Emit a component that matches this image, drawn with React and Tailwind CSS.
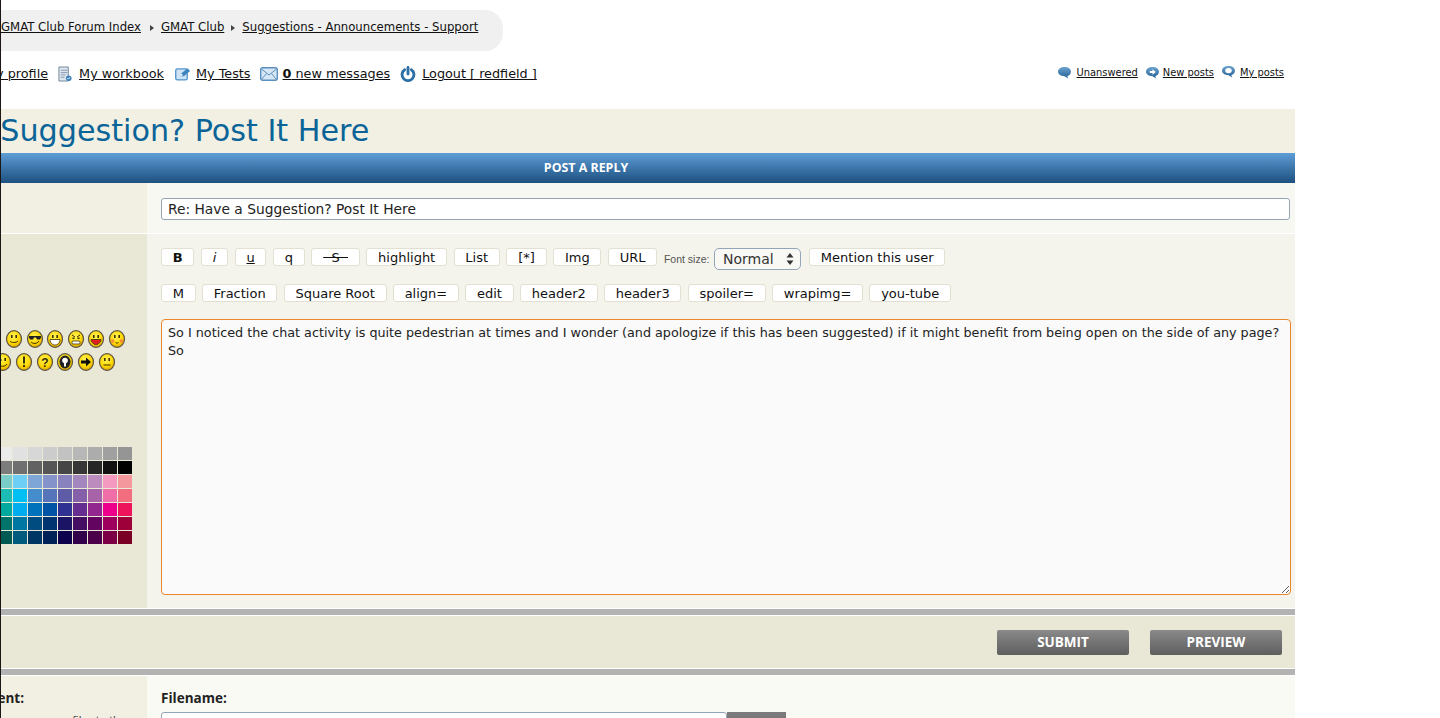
import { Fragment } from 'react'

const DEJAVU = "font-['DejaVu_Sans',sans-serif]"

const topButtons = ['B', 'i', 'u', 'q', 'S', 'highlight', 'List', '[*]', 'Img', 'URL']
const bottomButtons = ['M', 'Fraction', 'Square Root', 'align=', 'edit', 'header2', 'header3', 'spoiler=', 'wrapimg=', 'you-tube']

const palette = [
  ['#ebebeb', '#e1e1e1', '#d7d7d7', '#cccccc', '#c2c2c2', '#b7b7b7', '#acacac', '#a0a0a0', '#959595'],
  ['#7c7c7c', '#6f6f6f', '#626262', '#555555', '#464646', '#363636', '#262626', '#111111', '#000000'],
  ['#7accc8', '#6dcff6', '#7ea7d8', '#8493ca', '#8882be', '#a286bd', '#bc8cbf', '#f49ac1', '#f5989d'],
  ['#1cbbb4', '#00bff3', '#448ccb', '#5574b9', '#5e5ca7', '#855fa8', '#a763a8', '#ef6ea8', '#f26d7d'],
  ['#00a99d', '#00aeef', '#0072bc', '#0054a6', '#2e3192', '#662d91', '#92278f', '#ec008c', '#ed145b'],
  ['#00746b', '#0076a3', '#004b80', '#003471', '#1b1464', '#440e62', '#630460', '#9e005d', '#9e0039'],
  ['#005952', '#005b7f', '#003663', '#002157', '#0d004c', '#32004b', '#4b0049', '#7b0046', '#7a0026'],
]

function Smiley({ children }) {
  return (
    <svg viewBox="0 0 18 18" className="w-[18px] h-[18px] shrink-0">
      <defs>
        <radialGradient id="sm" cx="45%" cy="35%" r="70%">
          <stop offset="0%" stopColor="#fff25a" />
          <stop offset="60%" stopColor="#ffd800" />
          <stop offset="100%" stopColor="#d99a00" />
        </radialGradient>
      </defs>
      <ellipse cx="9" cy="9" rx="7.5" ry="8.4" fill="url(#sm)" stroke="#5c5546" strokeWidth="1.2" />
      {children}
    </svg>
  )
}

const eyes = (
  <Fragment>
    <rect x="6" y="5" width="1.6" height="3" fill="#3a3000" />
    <rect x="10.4" y="5" width="1.6" height="3" fill="#3a3000" />
  </Fragment>
)

const smileysTop = [
  <Fragment key="a">{eyes}<path d="M5 11c1.5 2 6 2 8 0" fill="none" stroke="#3a3000" /></Fragment>,
  <Fragment key="b"><path d="M3 6h12v1.5l-1 2h-3l-1-2H8l-1 2H4l-1-2z" fill="#222" /><path d="M5 12c2 2 6 2 8-1" fill="none" stroke="#3a3000" /></Fragment>,
  <Fragment key="c">{eyes}<path d="M4 9.500h10c0 4-3 5.500-5 5.500s-5-1.500-5-5.500z" fill="#fff" stroke="#3a3000" strokeWidth=".8" /></Fragment>,
  <Fragment key="d"><path d="M5 5l3 2M13 5l-3 2" stroke="#3a3000" /><rect x="5.500" y="7.500" width="2" height="1.500" fill="#3a3000" /><rect x="10.500" y="7.500" width="2" height="1.500" fill="#3a3000" /><rect x="5" y="11" width="8" height="3" rx="1" fill="#fff" stroke="#3a3000" strokeWidth=".8" /></Fragment>,
  <Fragment key="e">{eyes}<path d="M4 9.500h10c0 2-1 3-2 3.500-1 2-5 2-6 0-1-.500-2-1.500-2-3.500z" fill="#e02020" stroke="#3a3000" strokeWidth=".8" /></Fragment>,
  <Fragment key="f">{eyes}<circle cx="4.500" cy="11" r="1.800" fill="#f98a3a" /><circle cx="13.500" cy="11" r="1.800" fill="#f98a3a" /><path d="M7.500 12.500c1 .8 2 .8 3 0" fill="none" stroke="#3a3000" /></Fragment>,
]

const smileysBottom = [
  <Fragment key="a"><rect x="10.400" y="5" width="1.600" height="3" fill="#3a3000" /><path d="M5 7h3" stroke="#3a3000" /><path d="M5 11c1.500 3 6 3 8 0" fill="none" stroke="#3a3000" /></Fragment>,
  <Fragment key="b"><rect x="8" y="3.500" width="2" height="7" fill="#3a3000" /><rect x="8" y="12" width="2" height="2" fill="#3a3000" /></Fragment>,
  <text key="c" x="9" y="14" textAnchor="middle" fontSize="12" fontWeight="700" fontFamily="Liberation Sans" fill="#3a3000">?</text>,
  <Fragment key="d"><ellipse cx="9" cy="9" rx="5.500" ry="6.500" fill="#222" /><circle cx="9" cy="7.500" r="2.800" fill="#fff" /><rect x="8" y="10" width="2" height="3.500" fill="#fff" /></Fragment>,
  <path key="e" d="M4 7.500h5V4.500L14 9l-5 4.500v-3H4z" fill="#111" />,
  <Fragment key="f">{eyes}<path d="M5.500 12h7" stroke="#3a3000" /></Fragment>,
]

function ToolButton({ label }) {
  let text = label
  if (label === 'B') text = <b>B</b>
  if (label === 'i') text = <i>i</i>
  if (label === 'u') text = <u>u</u>
  if (label === 'S') text = <s className="decoration-[#111]">{'\u00a0\u00a0S\u00a0\u00a0'}</s>
  return (
    <button className="h-[18px] px-[10.750px] bg-white border border-[#e2e0d0] rounded-[3px] text-[13px] leading-[15px] text-[#111] shrink-0">
      {text}
    </button>
  )
}

function WorkbookIcon() {
  return (
    <svg viewBox="0 0 15 16" className="w-[14px] h-[16px] shrink-0">
      <path d="M1 .5h10v15H1z" fill="#dfe6ee" stroke="#6c8198" />
      <path d="M3 4h7M3 6.500h7M3 9h5M3 11.500h4" stroke="#8397ad" />
      <circle cx="11.500" cy="12.500" r="3" fill="#3d82bd" />
      <path d="M10 12.500l1 1 2-2" stroke="#fff" fill="none" />
    </svg>
  )
}

function TestsIcon() {
  return (
    <svg viewBox="0 0 18 15" className="w-4 h-[14px] shrink-0">
      <rect x=".8" y="1.800" width="13" height="12.400" rx="2" fill="#cfe3f4" stroke="#4f93cc" strokeWidth="1.500" />
      <path d="M6 10l1-3 7-6 3 3-7 6z" fill="#3f85c0" />
      <path d="M6 10l1-3 2 2z" fill="#fff" />
    </svg>
  )
}

function MailIcon() {
  return (
    <svg viewBox="0 0 18 14" className="w-[18px] h-[14px] shrink-0">
      <rect x=".7" y=".7" width="16.600" height="12.600" rx="2" fill="#d6e6f4" stroke="#5a8fbe" strokeWidth="1.400" />
      <path d="M1.500 2l7.500 6 7.500-6M1.500 12.500l5-6M16.500 12.500l-5-6" fill="none" stroke="#5a8fbe" />
    </svg>
  )
}

function PowerIcon() {
  return (
    <svg viewBox="0 0 17 17" className="w-4 h-4 shrink-0">
      <path d="M5 4a6.300 6.300 0 1 0 7 0" fill="none" stroke="#2c6fa6" strokeWidth="3" strokeLinecap="round" />
      <path d="M8.500 1.500v7" stroke="#2c6fa6" strokeWidth="3" strokeLinecap="round" />
    </svg>
  )
}

function Bubble({ kind }) {
  return (
    <svg viewBox="0 0 16 14" className="w-[15px] h-[13px] shrink-0">
      <defs>
        <linearGradient id="bb" x1="0" y1="0" x2="0" y2="1">
          <stop offset="0%" stopColor="#6ea3cf" />
          <stop offset="100%" stopColor="#225f93" />
        </linearGradient>
      </defs>
      <path d="M8 1c4 0 7 2 7 5s-2 4.500-4 5l1 2.500-4-2.500c-4 0-7-2-7-5s3-5 7-5z" fill="url(#bb)" />
      {kind === 'new' && <path d="M5 5.500h3V3.500l3.500 3-3.500 3v-2H5z" fill="#fff" />}
      {kind === 'my' && <ellipse cx="8" cy="6" rx="3.500" ry="2.800" fill="#fff" />}
    </svg>
  )
}

function Crumb() {
  return (
    <svg viewBox="0 0 4 6" className="w-1 h-[6px] shrink-0">
      <path d="M0 0l4 3-4 3z" fill="#444" />
    </svg>
  )
}

export default function App() {
  return (
    <div className={`h-[718px] overflow-hidden bg-white ${DEJAVU}`}>
      <div className="w-[1295px] h-[718px] overflow-hidden border-l border-[#1c1714]">
        {/* top links */}
        <div className="h-[109px] pt-[10px] overflow-hidden">
          <div className="w-[502px] h-[41px] pb-[5px] bg-[#f0f0f0] rounded-r-[18px] flex items-center gap-[7px] text-[11.700px] text-[#111]">
            <a className="underline mr-[2px]">GMAT Club Forum Index</a>
            <Crumb />
            <a className="underline">GMAT Club</a>
            <Crumb />
            <a className="underline">Suggestions - Announcements - Support</a>
          </div>
          <div className="flex justify-between items-center mt-[13px] pr-[11px] h-[20px]">
            <div className="flex items-center text-[12.800px] text-[#111] -ml-[16px]">
              <a className="underline">My profile</a>
              <span className="ml-[10px]"><WorkbookIcon /></span>
              <a className="underline ml-[7px]">My workbook</a>
              <span className="ml-[11px]"><TestsIcon /></span>
              <a className="underline ml-[5px]">My Tests</a>
              <span className="ml-[9px]"><MailIcon /></span>
              <a className="underline ml-[5px]"><b>0</b> new messages</a>
              <span className="ml-[10px]"><PowerIcon /></span>
              <a className="underline ml-[6px]">Logout [ redfield ]</a>
            </div>
            <div className="flex items-center text-[9.900px] text-[#111] pb-[2px]">
              <Bubble />
              <a className="underline ml-[5px]">Unanswered</a>
              <span className="ml-[7px]"><Bubble kind="new" /></span>
              <a className="underline ml-[3px]">New posts</a>
              <span className="ml-[7px] -mt-[3px]"><Bubble kind="my" /></span>
              <a className="underline ml-[4px]">My posts</a>
            </div>
          </div>
        </div>

        {/* title */}
        <div className="h-[44px] bg-[#f2f0e2] overflow-hidden flex items-center">
          <h2 className="-ml-[116px] whitespace-nowrap text-[30.2px] text-[#0b6498]">Have a Suggestion? Post It Here</h2>
        </div>

        <div className="h-[30px] pt-px bg-gradient-to-b from-[#5e9dd6] to-[#1d5180] flex items-center justify-center pr-[124px] text-[12.400px] font-bold text-white font-['Open_Sans',sans-serif]">
          POST A REPLY
        </div>

        {/* subject */}
        <div className="flex h-[50px]">
          <div className="w-[146px] bg-[#f2f0e2]" />
          <div className="flex-1 bg-[#f8f8f3] pl-[14px] pr-[5px] pt-[14px]">
            <input
              readOnly
              value="Re: Have a Suggestion? Post It Here"
              className="w-full h-[22px] px-[6px] bg-white border border-[#94a5b8] rounded-[3px] text-[13.800px] text-[#222] outline-none"
            />
          </div>
        </div>

        {/* editor */}
        <div className="flex h-[375px] border-t border-white">
          <div className="w-[146px] bg-[#e9e7d6] overflow-hidden pt-[96px]">
            <div className="flex gap-[2.600px] ml-[4px]">
              {smileysTop.map((s, i) => <Smiley key={i}>{s}</Smiley>)}
            </div>
            <div className="flex gap-[2.800px] -ml-[7px] mt-[5px]">
              {smileysBottom.map((s, i) => <Smiley key={i}>{s}</Smiley>)}
            </div>
            <div className="grid grid-cols-[repeat(9,14px)] auto-rows-[13px] gap-x-px gap-y-px -ml-[3px] mt-[76px]">
              {palette.flat().map((c) => (
                <div key={c} className="h-[13px]" style={{ backgroundColor: c }} />
              ))}
            </div>
          </div>
          <div className="flex-1 bg-[#f4f4ec] pl-[14px] pr-[4px] pt-[14px]">
            <div className="flex items-start gap-[6.600px] h-[22px]">
              {topButtons.map((b) => <ToolButton key={b} label={b} />)}
              <span className="text-[10.500px] leading-[22px] text-[#555] font-['Liberation_Sans',sans-serif] -mr-[2px]">Font size:</span>
              <div className="w-[87px] h-[22px] mr-[1.500px] flex items-center justify-between pl-2 pr-[6px] bg-[#f8f8f4] border border-[#94a5b8] rounded-[5px] text-[14px] text-[#333]">
                Normal
                <svg viewBox="0 0 8 12" className="w-2 h-3"><path d="M4 0l3.500 4.500h-7zM4 12l3.500-4.500h-7z" fill="#333" /></svg>
              </div>
              <ToolButton label="Mention this user" />
            </div>
            <div className="flex items-start gap-[6.300px] mt-[14px]">
              {bottomButtons.map((b) => <ToolButton key={b} label={b} />)}
            </div>
            <textarea
              readOnly
              defaultValue={'So I noticed the chat activity is quite pedestrian at times and I wonder (and apologize if this has been suggested) if it might benefit from being open on the side of any page?\nSo'}
              className="block w-full h-[276px] mt-[17px] px-[6px] py-[4px] bg-[#fafafa] border border-[#e8872b] rounded-[4px] text-[12.750px] leading-[18px] text-[#222] outline-none"
            />
          </div>
        </div>

        {/* submit bar */}
        <div className="h-[8px] bg-[#b3b3b3] border-y border-white" />
        <div className="h-[52px] bg-[#e9e7d6] flex items-center justify-end gap-[21px] pr-[13px]">
          <button className="w-[132px] h-[25px] pt-px rounded-[2px] bg-gradient-to-b from-[#8a8a8a] to-[#5e5e5e] text-[13.500px] font-bold text-white font-['Open_Sans',sans-serif]">SUBMIT</button>
          <button className="w-[132px] h-[25px] pt-px rounded-[2px] bg-gradient-to-b from-[#8a8a8a] to-[#5e5e5e] text-[13.500px] font-bold text-white font-['Open_Sans',sans-serif]">PREVIEW</button>
        </div>
        <div className="h-[8px] bg-[#b3b3b3] border-y border-white" />

        {/* attachment */}
        <div className="flex h-[100px] font-['Open_Sans',sans-serif]">
          <div className="w-[146px] bg-[#f2f0e2] overflow-hidden pt-[14px]">
            <div className="flex justify-end w-[23px] whitespace-nowrap text-[13.500px] font-bold text-[#222] leading-[16px]">Add an attachment:</div>
            <div className="mt-[8px] w-[125px] flex justify-end text-[11px] leading-[12px] whitespace-nowrap text-[#333]">one or more files to the</div>
          </div>
          <div className="flex-1 bg-[#f9faf4] pl-[14px] pt-[14px]">
            <div className="text-[13.500px] font-bold text-[#222] leading-[16px]">Filename:</div>
            <div className="flex mt-[6px]">
              <div className="w-[566px] h-[30px] bg-white border border-[#94a5b8] rounded-[3px]" />
              <div className="w-[59px] h-[30px] bg-[#7a7a7a]" />
            </div>
          </div>
        </div>
      </div>
    </div>
  )
}
